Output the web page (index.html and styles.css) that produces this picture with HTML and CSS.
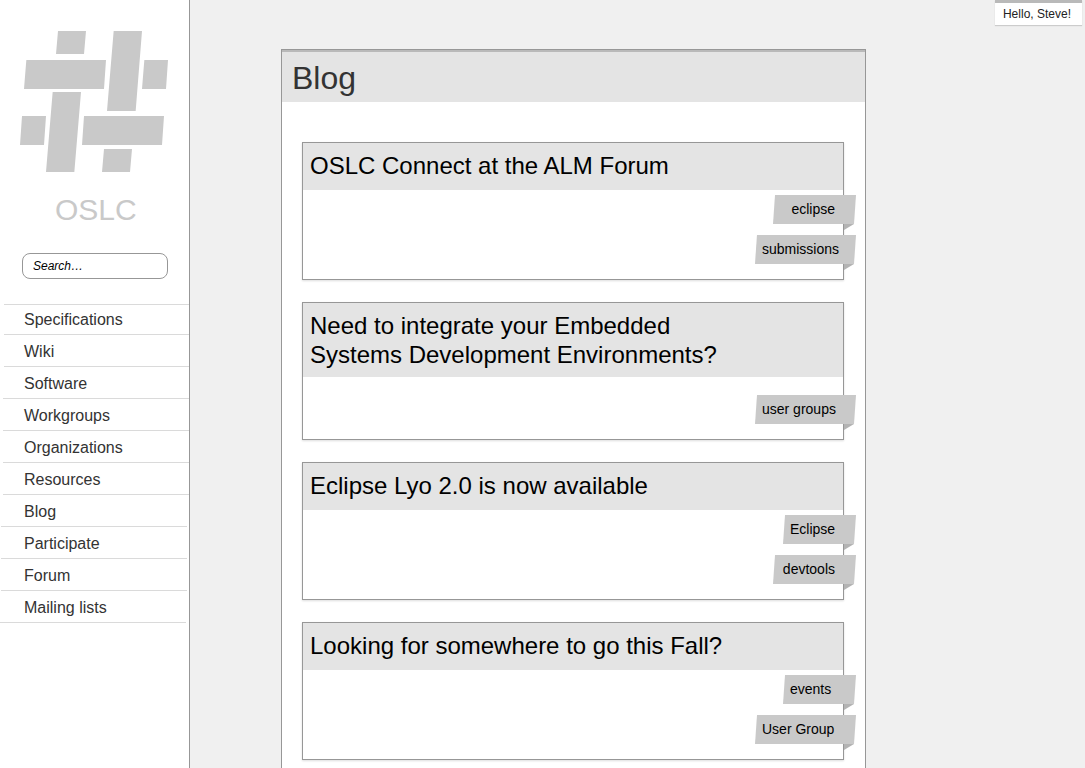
FILE: index.html
```html
<!DOCTYPE html>
<html lang="en">
<head>
<meta charset="utf-8">
<title>Blog - OSLC</title>
<link rel="stylesheet" href="styles.css">
</head>
<body>
<div class="layout">
  <aside class="sidebar">
    <a class="brand" href="#">
      <svg class="brand-mark" viewBox="60 63 444 423" aria-hidden="true">
        <path d="M174 63H258L252 132H168ZM341 63H426L407 303H321ZM79 150H318L312 237H72ZM433 150H504L498 237H426ZM158 246H243L223 486H138ZM66 318H138L132 405H60ZM252 318H492L486 405H246ZM312 417H396L390 486H306Z"/>
      </svg>
      <span class="brand-name">OSLC</span>
    </a>
    <form class="search" role="search">
      <input class="search-input" type="search" aria-label="Search" placeholder="Search…">
    </form>
    <nav>
      <ul class="nav">
        <li><a href="#">Specifications</a></li>
        <li><a href="#">Wiki</a></li>
        <li><a href="#">Software</a></li>
        <li><a href="#">Workgroups</a></li>
        <li><a href="#">Organizations</a></li>
        <li><a href="#">Resources</a></li>
        <li><a href="#">Blog</a></li>
        <li><a href="#">Participate</a></li>
        <li><a href="#">Forum</a></li>
        <li><a href="#">Mailing lists</a></li>
      </ul>
    </nav>
  </aside>
  <main class="main">
    <a class="user" href="#">Hello, Steve!</a>
    <section class="panel">
      <h1 class="panel-title">Blog</h1>
      <div class="posts">
        <article class="post">
          <h2 class="post-title"><a href="#">OSLC Connect at the ALM Forum</a></h2>
          <div class="tags">
            <a class="tag tag-medium" href="#">eclipse</a>
            <a class="tag tag-long" href="#">submissions</a>
          </div>
        </article>
        <article class="post">
          <h2 class="post-title"><a href="#">Need to integrate your Embedded<br>Systems Development Environments?</a></h2>
          <div class="tags">
            <a class="tag tag-long" href="#">user groups</a>
          </div>
        </article>
        <article class="post">
          <h2 class="post-title"><a href="#">Eclipse Lyo 2.0 is now available</a></h2>
          <div class="tags">
            <a class="tag" href="#">Eclipse</a>
            <a class="tag tag-medium" href="#">devtools</a>
          </div>
        </article>
        <article class="post">
          <h2 class="post-title"><a href="#">Looking for somewhere to go this Fall?</a></h2>
          <div class="tags">
            <a class="tag" href="#">events</a>
            <a class="tag tag-long" href="#">User Group</a>
          </div>
        </article>
      </div>
    </section>
  </main>
</div>
</body>
</html>
```

FILE: styles.css
```css
* {
  box-sizing: border-box;
}

body {
  margin: 0;
  background: #f0f0f0;
  color: #000;
  font-family: "Liberation Sans", Arial, sans-serif;
}

a {
  color: inherit;
  text-decoration: none;
}

.layout {
  display: flex;
  min-height: 100vh;
}

/* Sidebar */
.sidebar {
  flex: 0 0 190px;
  min-width: 0;
  padding-top: 31px;
  background: #fff;
  border-right: 1px solid #979797;
}

.brand {
  display: flex;
  flex-direction: column;
  gap: 20px;
  color: #c9c9c9;
}

.brand-mark {
  width: 148px;
  height: 141px;
  margin-left: 20px;
  fill: currentColor;
}

.brand-name {
  padding-left: 55px;
  font-size: 30px;
  line-height: 36px;
}

.search {
  padding: 25px 21px 25px 22px;
}

.search-input {
  display: block;
  width: 100%;
  height: 26px;
  padding: 0 10px;
  background: #fff;
  border: 1px solid #979797;
  border-radius: 8px;
  appearance: none;
  font: italic 12px "Liberation Sans", Arial, sans-serif;
}

.search-input::placeholder {
  color: #000;
  opacity: 1;
}

.nav {
  margin: 0;
  padding: 0;
  list-style: none;
  color: #333;
  font-size: 16px;
  line-height: 29px;
}

.nav li {
  --start: 4px;
  --end: 0px;
  margin: 0 var(--end) 0 var(--start);
  padding: 2px 0 0 calc(24px - var(--start));
  border-bottom: 1px solid #dadada;
}

.nav li:first-child {
  padding-top: 0;
  border-top: 1px solid #dadada;
}

.nav li:nth-child(n+3) {
  --start: 3px;
}

.nav li:nth-child(n+7) {
  --start: 1px;
  --end: 2px;
}

.nav li:last-child {
  --start: 0px;
  --end: 3px;
}

.nav a {
  display: block;
}

/* Main column */
.main {
  flex: 1;
  min-width: 0;
  display: flex;
  flex-direction: column;
}

.user {
  align-self: flex-end;
  margin-right: 3px;
  padding: 0 11px 0 8px;
  background: #fff;
  border-top: 3px solid #b9b9b9;
  box-shadow: 0 1px 1px #ccc;
  color: #222;
  font-size: 12px;
  line-height: 22px;
}

.panel {
  flex: 1;
  width: calc(100% - 91px);
  max-width: 585px;
  margin: 24px 0 0 91px;
  background: #fff;
  border: 1px solid #979797;
  border-bottom: 0;
}

.panel-title {
  margin: 0;
  padding: 8px 10px 6px;
  background: #e4e4e4;
  border-top: 2px solid #b9b9b9;
  color: #333;
  font-size: 32px;
  font-weight: 400;
  line-height: 36px;
}

.posts {
  display: flex;
  flex-direction: column;
  gap: 22px;
  padding: 40px 21px 8px 20px;
}

.post {
  display: flex;
  flex-direction: column;
  min-height: 138px;
  border: 1px solid #979797;
  box-shadow: 0 1px 2px #ddd;
}

.post-title {
  min-height: 47px;
  margin: 0;
  padding: 8px 7px;
  background: #e4e4e4;
  font-size: 24px;
  font-weight: 400;
  line-height: 29px;
}

.tags {
  display: flex;
  flex-direction: column;
  align-items: flex-end;
  gap: 11px;
  margin: auto -13px 15px 0;
}

/* Slanted label whose lower corner folds behind the card edge */
.tag {
  position: relative;
  isolation: isolate;
  min-width: 73px;
  padding: 0 17px 0 7px;
  font-size: 14px;
  line-height: 29px;
}

.tag::before,
.tag::after {
  content: "";
  position: absolute;
  z-index: -1;
}

.tag::before {
  inset: 0;
  background: #c9c9c9;
  clip-path: polygon(2px 0, 100% 0, calc(100% - 2px) 100%, 0 100%);
}

.tag::after {
  top: 100%;
  right: 2px;
  width: 10px;
  height: 6px;
  background: #b3b3b3;
  clip-path: polygon(0 0, 100% 0, 0 100%);
}

.tag-medium {
  min-width: 83px;
  padding-right: 21px;
  text-align: right;
}

.tag-long {
  min-width: 101px;
}
```
